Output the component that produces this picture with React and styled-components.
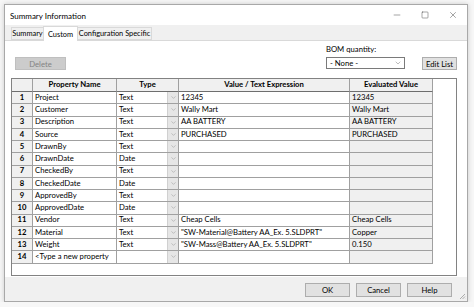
import React from "react";
import styled, { createGlobalStyle } from "styled-components";
import { Minus, Square, X, ChevronDown } from "lucide-react";

const GlobalStyle = createGlobalStyle`
  body {
    margin: 0;
    background: #f7f7f7;
    font-family: "Lato", "Noto Sans", sans-serif;
    font-size: 7.7px;
    color: #000;
  }
`;

const Window = styled.div`
  margin: 4px 0 0 4px;
  width: 464px;
  height: 298px;
  box-sizing: border-box;
  border: 1px solid #a8a8a8;
  background: #f0f0f0;
  display: flex;
  flex-direction: column;
  box-shadow: 0 0 5px rgba(0, 0, 0, 0.18);
`;

const TitleBar = styled.div`
  height: 20px;
  background: #fff;
  display: flex;
  align-items: center;
  padding-left: 5px;
`;

const Title = styled.span`
  flex: 1;
  padding-top: 1px;
  font-size: 8px;
`;

const WinButton = styled.div`
  width: 28px;
  height: 20px;
  display: flex;
  align-items: center;
  justify-content: center;
  color: #222;
`;

const TabStrip = styled.div`
  height: 15px;
  display: flex;
  align-items: flex-end;
  padding-left: 6px;
  position: relative;
  z-index: 1;
`;

const Tab = styled.div`
  height: ${p => (p.$active ? "15px" : "13px")};
  width: ${p => p.$w}px;
  box-sizing: border-box;
  border: 1px solid #d9d9d9;
  border-bottom: ${p => (p.$active ? "none" : "1px solid #d9d9d9")};
  background: ${p => (p.$active ? "#fff" : "#f0f0f0")};
  margin: 0 ${p => (p.$active ? "-1px" : "0")} ${p => (p.$active ? "-1px" : "0")};
  display: flex;
  align-items: center;
  justify-content: center;
  white-space: nowrap;
  font-size: 7.4px;
`;

const Panel = styled.div`
  height: 237px;
  box-sizing: border-box;
  background: #fff;
  border-top: 1px solid #d9d9d9;
  padding: 0 10px 0 6px;
  display: flex;
  flex-direction: column;
`;

const Toolbar = styled.div`
  height: 37px;
  display: flex;
  align-items: flex-end;
  padding-bottom: 8px;
  box-sizing: border-box;
`;

const Button = styled.div`
  height: 13px;
  width: ${p => p.$w}px;
  box-sizing: border-box;
  background: ${p => (p.$disabled ? "#cccccc" : "#e1e1e1")};
  border: 1px solid ${p => (p.$disabled ? "#bfbfbf" : "#adadad")};
  color: ${p => (p.$disabled ? "#838383" : "#000")};
  display: flex;
  align-items: center;
  justify-content: center;
  white-space: nowrap;
  margin-left: ${p => p.$ml || 0}px;
`;

const Spacer = styled.div`
  flex: 1;
`;

const BomGroup = styled.div`
  display: flex;
  flex-direction: column;
  gap: 3px;
  margin-bottom: 1px;
`;

const Select = styled.div`
  width: 79px;
  height: 12px;
  box-sizing: border-box;
  border: 1px solid #7a7a7a;
  display: flex;
  align-items: center;
  padding: 0 2px 0 3px;
  span { flex: 1; }
  svg { color: #555; }
`;

const Grid = styled.div`
  height: 198px;
  box-sizing: border-box;
  border: 1px solid #828282;
  background: #fff;
`;

const Table = styled.div`
  display: grid;
  grid-template-columns: 21px 84px 62px 171px 83px;
  grid-template-rows: 13px;
  grid-auto-rows: 12.25px;
  width: 421px;
`;

const Cell = styled.div`
  box-sizing: border-box;
  border-right: 1px solid #a0a0a0;
  border-bottom: 1px solid ${p => (p.$head ? "#6e6e6e" : "#a0a0a0")};
  background: ${p => (p.$gray ? "#f0f0f0" : "#fff")};
  font-weight: ${p => (p.$bold ? 700 : 400)};
  display: flex;
  align-items: center;
  justify-content: ${p => (p.$center ? "center" : "flex-start")};
  padding-left: ${p => (p.$center ? 0 : 2)}px;
  white-space: nowrap;
  overflow: hidden;
  line-height: 1;
`;

const TypeCell = styled(Cell)`
  span { flex: 1; }
`;

const DropBtn = styled.div`
  width: 10px;
  align-self: stretch;
  background: #e6e6e6;
  border-left: 1px solid #d0d0d0;
  display: flex;
  align-items: center;
  justify-content: center;
  color: #7a7a7a;
`;

const Footer = styled.div`
  flex: 1;
  display: flex;
  align-items: center;
  justify-content: flex-end;
  padding: 2px 15px 0 0;
  gap: 6px;
  position: relative;
`;

const Grip = styled.svg`
  position: absolute;
  right: 1px;
  bottom: 1px;
`;

const FootBtn = styled(Button)`
  height: 14px;
  width: 45px;
`;

const rows = [
  ["Project", "Text", "12345", "12345"],
  ["Customer", "Text", "Wally Mart", "Wally Mart"],
  ["Description", "Text", "AA BATTERY", "AA BATTERY"],
  ["Source", "Text", "PURCHASED", "PURCHASED"],
  ["DrawnBy", "Text", "", ""],
  ["DrawnDate", "Date", "", ""],
  ["CheckedBy", "Text", "", ""],
  ["CheckedDate", "Date", "", ""],
  ["ApprovedBy", "Text", "", ""],
  ["ApprovedDate", "Date", "", ""],
  ["Vendor", "Text", "Cheap Cells", "Cheap Cells"],
  ["Material", "Text", "\"SW-Material@Battery AA_Ex. 5.SLDPRT\"", "Copper"],
  ["Weight", "Text", "\"SW-Mass@Battery AA_Ex. 5.SLDPRT\"", "0.150"],
  ["<Type a new property", "", "", ""],
];

export default function App() {
  return (
    <>
      <GlobalStyle />
      <Window>
        <TitleBar>
          <Title>Summary Information</Title>
          <WinButton><Minus size={10} strokeWidth={1} /></WinButton>
          <WinButton><Square size={8} strokeWidth={1.2} /></WinButton>
          <WinButton><X size={10} strokeWidth={1} /></WinButton>
        </TitleBar>
        <TabStrip>
          <Tab $w={33}>Summary</Tab>
          <Tab $w={35} $active>Custom</Tab>
          <Tab $w={75}>Configuration Specific</Tab>
        </TabStrip>
        <Panel>
          <Toolbar>
            <Button $w={51} $ml={4} $disabled>Delete</Button>
            <Spacer />
            <BomGroup>
              <span>BOM quantity:</span>
              <Select>
                <span>- None -</span>
                <ChevronDown size={8} strokeWidth={1.2} />
              </Select>
            </BomGroup>
            <Button $w={35} $ml={17}>Edit List</Button>
          </Toolbar>
          <Grid>
            <Table>
              <Cell $gray $head />
              <Cell $gray $head $bold $center>Property Name</Cell>
              <Cell $gray $head $bold $center>Type</Cell>
              <Cell $gray $head $bold $center>Value / Text Expression</Cell>
              <Cell $gray $head $bold $center>Evaluated Value</Cell>
              {rows.map((r, i) => (
                <React.Fragment key={i}>
                  <Cell $gray $bold $center>{i + 1}</Cell>
                  <Cell>{r[0]}</Cell>
                  <TypeCell>
                    <span>{r[1]}</span>
                    <DropBtn><ChevronDown size={7} strokeWidth={1.3} /></DropBtn>
                  </TypeCell>
                  <Cell>{r[2]}</Cell>
                  <Cell $gray>{r[3]}</Cell>
                </React.Fragment>
              ))}
            </Table>
          </Grid>
        </Panel>
        <Footer>
          <FootBtn>OK</FootBtn>
          <FootBtn>Cancel</FootBtn>
          <FootBtn>Help</FootBtn>
          <Grip width="8" height="8" viewBox="0 0 8 8">
            <path d="M7 2L2 7M7 4.5L4.5 7M7 6.8L6.8 7" stroke="#9a9a9a" strokeWidth="0.8" />
          </Grip>
        </Footer>
      </Window>
    </>
  );
}
